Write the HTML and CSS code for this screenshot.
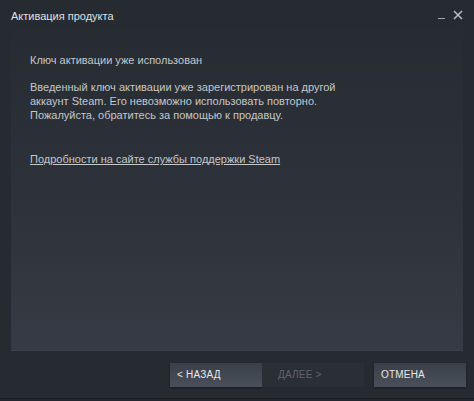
FILE: index.html
```html
<!DOCTYPE html>
<html lang="ru">
<head>
  <meta charset="UTF-8" />
  <title>Активация продукта</title>
  <link rel="stylesheet" href="styles.css">
</head>
<body>
<div class="okno">
  <div class="shapka">
    <span class="zagolovok">Активация продукта</span>
    <div class="knopki_okna">
      <span class="svernut"></span>
      <svg class="zakryt" width="10" height="10" viewBox="0 0 10 10">
        <path d="M1 1 L9 9 M9 1 L1 9" stroke="#b8bcc2" stroke-width="1.6" />
      </svg>
    </div>
  </div>

  <div class="panel">
    <p class="soobshenie">Ключ активации уже использован</p>
    <p class="opisanie">Введенный ключ активации уже зарегистрирован на другой<br>
      аккаунт Steam. Его невозможно использовать повторно.<br>
      Пожалуйста, обратитесь за помощью к продавцу.</p>
    <a class="ssylka" href="#">Подробности на сайте службы поддержки Steam</a>
  </div>

  <div class="niz">
    <button class="knopka">&lt; НАЗАД</button>
    <button class="knopka otkl" disabled>ДАЛЕЕ &gt;</button>
    <button class="knopka otmena">ОТМЕНА</button>
  </div>
</div>
</body>
</html>
```

FILE: styles.css
```css
html, body {
  margin: 0;
  padding: 0;
  height: 100%;
  background: #23262c;
}

.okno {
  height: 398px;
  display: flex;
  flex-direction: column;
  background: #262a31;
  font-family: "Liberation Sans", Arial, sans-serif;
  color: #c4c7cb;
  border-bottom: 1px solid #1a1c20;
}

.shapka {
  height: 30px;
  display: flex;
  align-items: center;
  justify-content: space-between;
  padding: 0 11px;
}

.zagolovok {
  font-size: 11px;
  color: #dfe1e3;
  margin-top: 1px;
}

.knopki_okna {
  display: flex;
  align-items: center;
  gap: 8px;
}

.svernut {
  width: 7px;
  height: 1px;
  background: #9ea3a9;
  margin-top: 7px;
}

.zakryt {
  display: block;
}

.panel {
  flex: 1;
  margin: 0 11px;
  padding: 19px 19px 0;
  background: linear-gradient(to bottom, #272b32 0%, #2d3139 50%, #363b45 100%);
  border-bottom: 1px solid #3d434d;
  font-size: 11px;
}

.soobshenie {
  margin: 5px 0 0;
}

.opisanie {
  margin: 14px 0 0;
  line-height: 14px;
}

.ssylka {
  display: inline-block;
  margin-top: 31px;
  color: #c4c7cb;
}

.niz {
  height: 47px;
  display: flex;
  align-items: center;
  padding: 0 8px 0 170px;
  box-sizing: border-box;
}

.knopka {
  width: 92px;
  height: 24px;
  border: none;
  padding: 0 0 0 7px;
  text-align: left;
  font-family: "Liberation Sans", Arial, sans-serif;
  font-size: 10px;
  letter-spacing: 0.2px;
  color: #e6e8ea;
  background: linear-gradient(to bottom, #3a3f48, #4a505a);
  box-shadow: 0 1px 2px rgba(0, 0, 0, 0.4);
}

.knopka.otkl {
  width: 102px;
  padding-left: 16px;
  color: #5f646c;
  background: #2a2e35;
  box-shadow: none;
}

.knopka.otmena {
  margin-left: 10px;
}
```
